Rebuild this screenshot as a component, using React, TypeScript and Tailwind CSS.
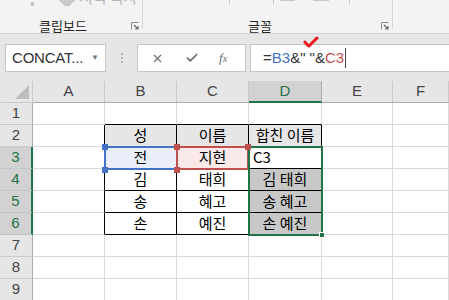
import { X, Check } from 'lucide-react'

const COLS = [33, 72, 72, 72, 73, 71, 56]
const colLetters = ['A', 'B', 'C', 'D', 'E', 'F']
const ROW_H = 22

const data: Record<string, string> = {
  B2: '성', C2: '이름', D2: '합친 이름',
  B3: '전', C3: '지현', D3: 'C3',
  B4: '김', C4: '태희', D4: '김 태희',
  B5: '송', C5: '혜고', D5: '송 혜고',
  B6: '손', C6: '예진', D6: '손 예진',
}

const kr = { fontFamily: '"Noto Sans CJK KR", "Noto Sans", sans-serif' }
const ui = { fontFamily: '"Liberation Sans", Arial, sans-serif' }

function cellClass(col: string, row: number) {
  const inTable = ['B', 'C', 'D'].includes(col) && row >= 2 && row <= 6
  const cls = ['flex items-center border-r border-b text-[15px] text-black whitespace-nowrap']
  // right border black where the table edge sits
  if (inTable || (col === 'A' && row >= 2 && row <= 6)) cls.push('border-r-black')
  else cls.push('border-r-[#d9d9d9]')
  if (inTable || (['B', 'C', 'D'].includes(col) && row === 1)) cls.push('border-b-black')
  else cls.push('border-b-[#d9d9d9]')
  if (row === 2 && inTable) cls.push('bg-[#e7e6e6]')
  else if (col === 'B' && row === 3) cls.push('bg-[#e9eef8]')
  else if (col === 'C' && row === 3) cls.push('bg-[#f9e9e9]')
  else if (col === 'D' && row >= 4 && row <= 6) cls.push('bg-[#c8c8c8]')
  else cls.push('bg-white')
  cls.push(col === 'D' && row === 3 ? 'justify-start pl-[4px]' : 'justify-center')
  return cls.join(' ')
}

function Handle({ className }: { className: string }) {
  return <div className={'absolute w-[6px] h-[6px] ' + className} />
}

export default function App() {
  const rows = [1, 2, 3, 4, 5, 6, 7, 8, 9]
  return (
    <div className="w-[449px] h-[300px] overflow-hidden bg-[#e6e6e6] relative">
      {/* ribbon */}
      <div className="h-[34px] bg-[#f3f3f3] border-b border-[#d5d5d5] flex">
        <div className="w-[142px] relative">
          <div className="flex items-start h-[6px] overflow-hidden text-[#b8b8b8]">
            <span className="ml-[30px] -mt-[3px] text-[9px]">▾</span>
            <span className="ml-[26px] -mt-[6px] w-[12px] h-[12px] rotate-45 bg-[#c9c9c9]" />
            <span className="ml-[6px] -mt-[11px] text-[15px] leading-[15px]" style={kr}>서식 복사</span>
          </div>
          <div className="absolute left-[39px] top-[16px] text-[13px] text-[#262626]" style={kr}>클립보드</div>
          <Launcher className="left-[131px]" />
        </div>
        <div className="w-px h-[29px] bg-[#d5d5d5]" />
        <div className="w-[249px] relative">
          <div className="absolute left-[86px] top-0 w-px h-[4px] bg-[#c6c6c6]" />
          <div className="absolute left-[137px] top-0 w-[15px] h-px bg-[#c6c6c6]" />
          <div className="absolute left-[130px] top-0 w-px h-[4px] bg-[#c6c6c6]" />
          <div className="absolute left-[170px] top-0 w-[16px] h-px bg-[#c6c6c6]" />
          <div className="absolute left-[206px] top-0 w-px h-[4px] bg-[#c6c6c6]" />
          <div className="absolute left-[105px] top-[16px] text-[13px] text-[#262626]" style={kr}>글꼴</div>
          <Launcher className="left-[238px]" />
        </div>
        <div className="w-px h-[29px] bg-[#d5d5d5]" />
      </div>

      {/* formula bar */}
      <div className="h-[47px] flex items-start pt-[10px]" style={ui}>
        <div className="ml-[5px] w-[101px] h-[28px] bg-white border border-[#c6c6c6] flex items-center pl-[6px] pr-[6px]">
          <span className="text-[15px] text-[#333] flex-1 tracking-[-0.2px]">CONCAT...</span>
          <span className="text-[8px] text-[#777]">▼</span>
        </div>
        <div className="w-[31px] h-[28px] flex flex-col items-center justify-center gap-[2px]">
          <span className="w-[2px] h-[2px] bg-[#b4b4b4]" />
          <span className="w-[2px] h-[2px] bg-[#b4b4b4]" />
          <span className="w-[2px] h-[2px] bg-[#b4b4b4]" />
        </div>
        <div className="w-[109px] h-[28px] bg-white border border-[#c6c6c6] flex items-center">
          <X className="ml-[13px] w-[13px] h-[13px] text-[#6b6b6b]" strokeWidth={2} />
          <Check className="ml-[21px] w-[14px] h-[14px] text-[#6b6b6b]" strokeWidth={3} />
          <span className="ml-[20px] text-[13px] italic text-[#6b6b6b]" style={{ fontFamily: '"Liberation Serif", serif' }}>
            f<span className="text-[10px]">x</span>
          </span>
        </div>
        <div className="ml-[4px] flex-1 h-[28px] bg-white border border-r-0 border-[#c6c6c6] flex items-center pl-[12px] relative">
          <span className="text-[15px] text-[#333]">=</span>
          <span className="text-[15px] text-[#4472c4]">B3</span>
          <span className="text-[15px] text-[#333] whitespace-pre">&amp;" "&amp;</span>
          <span className="text-[15px] text-[#c0504d]">C3</span>
          <span className="w-px h-[20px] bg-[#444] ml-[1px]" />
          <svg className="absolute left-[52px] -top-[9px]" width="16" height="12" viewBox="0 0 16 12">
            <path d="M2 6 Q4 9 6 10 Q10 6 14 2" fill="none" stroke="#e8141c" strokeWidth="3" strokeLinecap="round" />
          </svg>
        </div>
      </div>

      {/* grid */}
      <div className="relative bg-white" style={ui}>
        <div
          className="grid"
          style={{ gridTemplateColumns: COLS.map((w) => w + 'px').join(' '), gridAutoRows: ROW_H + 'px' }}
        >
          <div className="bg-[#e6e6e6] border-r border-b border-[#c9c9c9] relative">
            <svg className="absolute right-[3px] bottom-[3px]" width="14" height="14" viewBox="0 0 14 14">
              <path d="M14 0 L14 14 L0 14 Z" fill="#bdbdbd" />
            </svg>
          </div>
          {colLetters.map((c) => (
            <div
              key={c}
              className={
                c === 'D'
                  ? 'flex items-center justify-center bg-[#d2d2d2] border-r border-r-[#ababab] border-b-2 border-b-[#217346] text-[15px] text-[#217346]'
                  : 'flex items-center justify-center bg-[#e6e6e6] border-r border-b border-r-[#c9c9c9] border-b-[#ababab] text-[15px] text-[#444]'
              }
            >
              {c}
            </div>
          ))}
          {rows.map((r) => {
            const sel = r >= 3 && r <= 6
            return [
              <div
                key={'h' + r}
                className={
                  sel
                    ? 'flex items-center justify-center bg-[#d2d2d2] border-b border-b-[#c4c4c4] border-r-2 border-r-[#217346] text-[15px] text-[#217346]'
                    : 'flex items-center justify-center bg-[#e6e6e6] border-b border-r border-b-[#c9c9c9] border-r-[#ababab] text-[15px] text-[#444]'
                }
              >
                {r}
              </div>,
              ...colLetters.map((c) => (
                <div key={c + r} className={cellClass(c, r)} style={kr}>
                  {data[c + r] ?? ''}
                </div>
              )),
            ]
          })}
        </div>

        {/* selection overlays */}
        <div className="absolute left-[104px] top-[65px] w-[74px] h-[24px] border-2 border-[#4472c4]" />
        <div className="absolute left-[176px] top-[65px] w-[73px] h-[24px] border-2 border-[#c0504d]" />
        <div className="absolute left-[248px] top-[65px] w-[75px] h-[90px] border-2 border-[#217346]" />
        <Handle className="left-[102px] top-[63px] bg-[#4472c4]" />
        <Handle className="left-[102px] top-[86px] bg-[#4472c4]" />
        <Handle className="left-[174px] top-[63px] bg-[#c0504d]" />
        <Handle className="left-[174px] top-[86px] bg-[#c0504d]" />
        <Handle className="left-[245px] top-[63px] bg-[#c0504d]" />
        <Handle className="left-[319px] top-[151px] bg-[#217346] border border-white" />
      </div>
    </div>
  )
}

function Launcher({ className }: { className: string }) {
  return (
    <svg className={'absolute top-[22px] ' + className} width="8" height="8" viewBox="0 0 8 8">
      <path d="M0.5 7.5 V0.5 H7.5" fill="none" stroke="#8a8a8a" strokeWidth="1" />
      <path d="M3 3 L7 7 M7 4 V7 H4" fill="none" stroke="#6a6a6a" strokeWidth="1.2" />
    </svg>
  )
}
